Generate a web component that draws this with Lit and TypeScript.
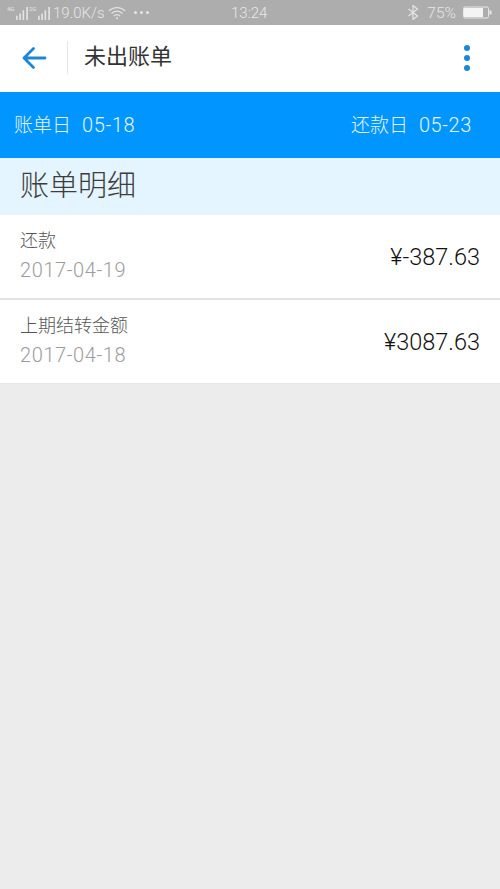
import { LitElement, html, css, svg } from "lit";
import { customElement } from "lit/decorators.js";

const bars = svg`<path d="M1 13h1.500v-4H1zM4 13h1.500V7H4zM7 13h1.500V4H7zM10.500 13H12V1h-1.500z" fill="#e4e4e4"/>`;

@customElement("app-root")
export class AppRoot extends LitElement {
  static styles = css`
    :host {
      display: block;
      position: relative;
      width: 500px;
      height: 889px;
      background: #ececec;
      overflow: hidden;
      font-family: Roboto, "Noto Sans CJK SC", sans-serif;
    }
    .status {
      height: 25px;
      background: #adadad;
      color: #e6e6e6;
      display: flex;
      align-items: center;
      justify-content: space-between;
      padding: 0 8px 0 7px;
      font-size: 15px;
      font-weight: 300;
    }
    .status-side { display: flex; align-items: center; }
    .sig { position: relative; width: 22px; height: 14px; display: flex; justify-content: flex-end; }
    .sig b {
      position: absolute;
      left: 0;
      top: -1px;
      font-size: 6px;
      line-height: 7px;
      font-weight: 400;
    }
    .speed { margin-left: 2px; }
    .wifi { margin-left: 3px; }
    .dots { margin-left: 8px; display: flex; gap: 3px; }
    .dots i { width: 3px; height: 3px; border-radius: 50%; background: #e6e6e6; }
    .time { position: absolute; left: 231px; top: 4px; font-size: 15px; line-height: 18px; font-weight: 300; color: #e8e8e8; }
    .pct { margin: 0 7px 0 8px; font-size: 15.5px; }
    .bar {
      height: 67px;
      background: #fff;
      display: flex;
      align-items: center;
      padding-bottom: 2px;
      box-sizing: border-box;
    }
    .back { width: 67px; display: flex; justify-content: center; }
    .sep { width: 1px; height: 33px; background: #e6e6e6; }
    .title { margin-left: 16px; font-size: 22px; color: #333; flex: 1; line-height: 30px; margin-top: -2px; }
    .more { display: flex; flex-direction: column; gap: 4px; margin-right: 30px; }
    .more i { width: 6px; height: 6px; border-radius: 50%; background: #1c87d6; }
    .dates {
      height: 66px;
      background: #0095ff;
      color: #e6f5ff;
      font-size: 19px;
      font-weight: 300;
      display: flex;
      align-items: center;
      justify-content: space-between;
      padding: 0 28px 4px 14px;
      box-sizing: border-box;
    }
    .dates span span { margin-left: 11px; font-size: 20px; letter-spacing: 0.6px; }
    .head {
      height: 57px;
      background: #e4f5ff;
      color: #3d3d3d;
      font-size: 29px;
      font-weight: 300;
      padding: 0 0 7px 20px;
      display: flex;
      align-items: center;
      box-sizing: border-box;
    }
    .row {
      height: 85px;
      background: #fff;
      border-bottom: 2px solid #e3e3e3;
      box-sizing: border-box;
      display: flex;
      align-items: center;
      justify-content: space-between;
      padding: 0 20px;
    }
    .row:last-child { height: 84px; border-bottom: 1px solid #e6e6e6; }
    .name { font-size: 18px; font-weight: 300; color: #555; line-height: 22px; }
    .date { font-size: 20px; font-weight: 300; color: #9c9c9c; line-height: 26px; margin-top: 5px; letter-spacing: 0.6px; }
    .amt { font-size: 23.5px; font-weight: 300; color: #111; }
  `;

  render() {
    return html`
      <div class="status">
        <div class="status-side">
          <div class="sig"><b>4G</b><svg width="14" height="14" viewBox="0 0 13 13">${bars}</svg></div>
          <div class="sig"><b>2G</b><svg width="14" height="14" viewBox="0 0 13 13">${bars}</svg></div>
          <span class="speed">19.0K/s</span>
          <svg class="wifi" width="18" height="14" viewBox="0 0 18 14" fill="none" stroke="#e4e4e4" stroke-width="1.300">
            <path d="M1 5a11 11 0 0 1 16 0M3.500 7.500a7.500 7.500 0 0 1 11 0M6 10a4 4 0 0 1 6 0"/>
            <circle cx="9" cy="12.300" r="1" fill="#e4e4e4" stroke="none"/>
          </svg>
          <div class="dots"><i></i><i></i><i></i></div>
        </div>
        <span class="time">13:24</span>
        <div class="status-side">
          <svg width="12" height="15" viewBox="0 0 12 15" fill="none" stroke="#e4e4e4" stroke-width="1.200">
            <path d="M1.500 4l9 7-4.500 3.500V.5L10.500 4l-9 7"/>
          </svg>
          <span class="pct">75%</span>
          <svg width="29" height="13" viewBox="0 0 29 13">
            <rect x="0.500" y="1" width="25" height="11" rx="1.500" fill="none" stroke="#e8e8e8" stroke-width="1"/>
            <rect x="1" y="2" width="19" height="9" fill="#f4f4f4"/>
            <rect x="26.500" y="4.500" width="2" height="4" fill="#e8e8e8"/>
          </svg>
        </div>
      </div>
      <div class="bar">
        <div class="back">
          <svg width="26" height="24" viewBox="0 0 26 24" fill="none" stroke="#1c87d6" stroke-width="2.800" stroke-linecap="round" stroke-linejoin="round">
            <path d="M24 12H3M12.500 2.500L3 12l9.500 9.500"/>
          </svg>
        </div>
        <div class="sep"></div>
        <div class="title">未出账单</div>
        <div class="more"><i></i><i></i><i></i></div>
      </div>
      <div class="dates">
        <span>账单日<span>05-18</span></span>
        <span>还款日<span>05-23</span></span>
      </div>
      <div class="head">账单明细</div>
      <div class="row">
        <div><div class="name">还款</div><div class="date">2017-04-19</div></div>
        <div class="amt">¥-387.63</div>
      </div>
      <div class="row">
        <div><div class="name">上期结转金额</div><div class="date">2017-04-18</div></div>
        <div class="amt">¥3087.63</div>
      </div>
    `;
  }
}
